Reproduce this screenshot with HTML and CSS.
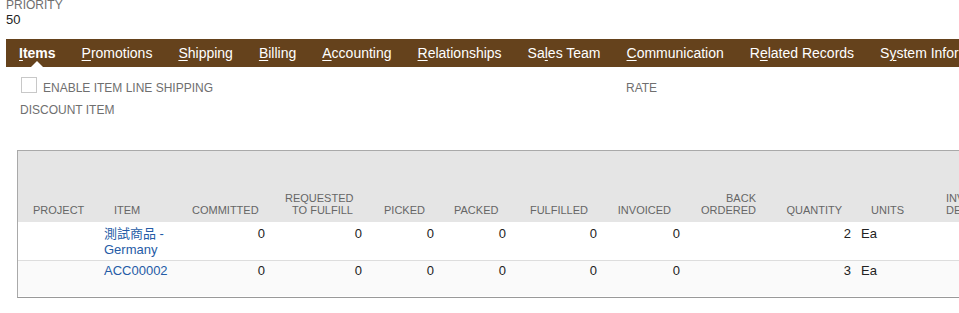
FILE: index.html
```html
<!DOCTYPE html>
<html lang="en">
<head>
  <meta charset="UTF-8" />
  <title>Sales Order</title>
  <link rel="stylesheet" href="styles.css">
</head>
<body>

  <!-- Priority field -->
  <div class="field">
    <div class="field-label">PRIORITY</div>
    <div class="field-value">50</div>
  </div>

  <!-- Subtabs -->
  <nav class="tabs">
    <a class="tab active" href="#"><u>I</u>tems</a>
    <a class="tab" href="#"><u>P</u>romotions</a>
    <a class="tab" href="#"><u>S</u>hipping</a>
    <a class="tab" href="#"><u>B</u>illing</a>
    <a class="tab" href="#"><u>A</u>ccounting</a>
    <a class="tab" href="#"><u>R</u>elationships</a>
    <a class="tab" href="#">Sa<u>l</u>es Team</a>
    <a class="tab" href="#"><u>C</u>ommunication</a>
    <a class="tab" href="#">R<u>e</u>lated Records</a>
    <a class="tab" href="#">S<u>y</u>stem Information</a>
  </nav>

  <!-- Item fields -->
  <div class="item-fields">
    <label class="check-field">
      <span class="checkbox"></span>
      <span class="field-label">ENABLE ITEM LINE SHIPPING</span>
    </label>
    <div class="field-label rate">RATE</div>
  </div>
  <div class="field-label discount">DISCOUNT ITEM</div>

  <!-- Item lines -->
  <div class="machine">
    <table class="lines">
      <thead>
        <tr>
          <th class="c-project">PROJECT</th>
          <th class="c-item">ITEM</th>
          <th class="c-num c-committed">COMMITTED</th>
          <th class="c-num c-requested">REQUESTED<br>TO FULFILL</th>
          <th class="c-num c-picked">PICKED</th>
          <th class="c-num c-packed">PACKED</th>
          <th class="c-num c-fulfilled">FULFILLED</th>
          <th class="c-num c-invoiced">INVOICED</th>
          <th class="c-num c-back">BACK<br>ORDERED</th>
          <th class="c-num c-qty">QUANTITY</th>
          <th class="c-units">UNITS</th>
          <th class="c-desc">INVENTORY<br>DETAIL</th>
        </tr>
      </thead>
      <tbody>
        <tr class="row-tall">
          <td></td>
          <td><a href="#">測試商品 - Germany</a></td>
          <td class="num">0</td>
          <td class="num">0</td>
          <td class="num">0</td>
          <td class="num">0</td>
          <td class="num">0</td>
          <td class="num">0</td>
          <td class="num"></td>
          <td class="num">2</td>
          <td>Ea</td>
          <td></td>
        </tr>
        <tr class="row-even">
          <td></td>
          <td><a href="#">ACC00002</a></td>
          <td class="num">0</td>
          <td class="num">0</td>
          <td class="num">0</td>
          <td class="num">0</td>
          <td class="num">0</td>
          <td class="num">0</td>
          <td class="num"></td>
          <td class="num">3</td>
          <td>Ea</td>
          <td></td>
        </tr>
      </tbody>
    </table>
  </div>

</body>
</html>
```

FILE: styles.css
```css
/* Base styling */
body {
  margin: 0;
  padding: 0 0 0 6px;
  font-family: 'Liberation Sans', Arial, 'Noto Sans CJK TC', sans-serif;
  color: #222;
  background: #fff;
  overflow: hidden;
  width: 1200px;
}
.field-label {
  font-size: 12px;
  line-height: 14px;
  color: #6f6f6f;
}
.field {
  margin-top: -2px;
}
.field-value {
  font-size: 13px;
  line-height: 16px;
  color: #222;
}
/* Subtab bar */
.tabs {
  display: flex;
  background-color: #65421c;
  height: 28px;
  margin-top: 11px;
}
.tab {
  position: relative;
  display: flex;
  align-items: center;
  padding: 0 13px;
  color: #fff;
  font-size: 14px;
  text-decoration: none;
  white-space: nowrap;
}
.tab u {
  text-decoration-thickness: 1px;
  text-underline-offset: 2px;
}
.tab.active {
  font-weight: bold;
}
/* Small pointer under the active tab */
.tab.active::after {
  content: "";
  position: absolute;
  left: 50%;
  bottom: 0;
  margin-left: -6px;
  border-left: 6px solid transparent;
  border-right: 6px solid transparent;
  border-bottom: 6px solid #fff;
}
/* Fields under the tabs */
.item-fields {
  display: flex;
  align-items: flex-end;
  margin-top: 10px;
  padding-left: 15px;
}
.check-field {
  display: flex;
  align-items: flex-end;
  width: 605px;
}
.checkbox {
  width: 14px;
  height: 14px;
  border: 1px solid #c8c8c8;
  background: #fff;
  margin-right: 6px;
}
.check-field .field-label,
.rate {
  margin-bottom: -2px;
}
.discount {
  margin-top: 10px;
  padding-left: 14px;
}
/* Item lines grid */
.machine {
  margin: 33px 0 0 11px;
  border: 1px solid #a9a9a9;
  border-bottom-color: #999;
  width: 1100px;
  padding-bottom: 1px;
}
.lines {
  border-collapse: collapse;
  table-layout: fixed;
  width: 1100px;
  font-size: 13px;
}
.lines th {
  background: #e5e5e5;
  height: 71px;
  box-sizing: border-box;
  padding: 0 14px 6px 15px;
  vertical-align: bottom;
  text-align: left;
  font-weight: normal;
  font-size: 11px;
  line-height: 12px;
  color: #666;
  white-space: nowrap;
}
.lines th.c-num {
  text-align: right;
}
.lines td {
  padding: 4px 5px 2px 5px;
  vertical-align: top;
  line-height: 16px;
  color: #222;
}
.lines td.num {
  text-align: right;
}
.lines a {
  color: #255ba6;
  text-decoration: none;
}
.row-tall td {
  height: 32px;
  border-bottom: 1px solid #ddd;
}
.row-even td {
  background: #fafafa;
  padding-top: 2px;
  height: 31px;
}
/* Column widths */
.c-project { width: 81px; }
.c-item { width: 78px; }
.c-committed { width: 93px; }
.c-requested { width: 97px; }
.c-picked { width: 72px; }
.c-packed { width: 72px; }
.c-fulfilled { width: 91px; }
.c-invoiced { width: 83px; }
.c-back { width: 85px; }
.c-qty { width: 86px; }
.c-units { width: 75px; }
.c-desc { width: 187px; }
```
